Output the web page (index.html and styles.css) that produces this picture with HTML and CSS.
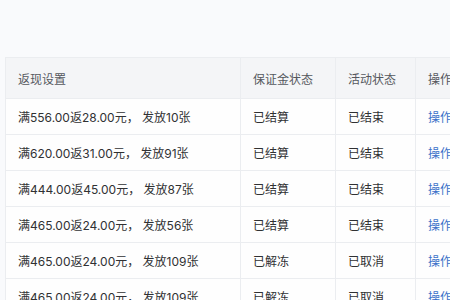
FILE: index.html
```html
<!DOCTYPE html>
<html lang="zh">
<head>
<meta charset="utf-8">
<link rel="stylesheet" href="styles.css">
</head>
<body>
<div class="page">
  <div class="topbar"></div>
  <div class="table-wrap">
    <table class="grid">
      <colgroup>
        <col class="c1"><col class="c2"><col class="c3"><col class="c4">
      </colgroup>
      <thead>
        <tr><th>返现设置</th><th>保证金状态</th><th>活动状态</th><th>操作</th></tr>
      </thead>
      <tbody>
        <tr><td>满556.00返28.00元， 发放10张</td><td>已结算</td><td>已结束</td><td><a class="op">操作</a></td></tr>
        <tr><td>满620.00返31.00元， 发放91张</td><td>已结算</td><td>已结束</td><td><a class="op">操作</a></td></tr>
        <tr><td>满444.00返45.00元， 发放87张</td><td>已结算</td><td>已结束</td><td><a class="op">操作</a></td></tr>
        <tr><td>满465.00返24.00元， 发放56张</td><td>已结算</td><td>已结束</td><td><a class="op">操作</a></td></tr>
        <tr><td>满465.00返24.00元， 发放109张</td><td>已解冻</td><td>已取消</td><td><a class="op">操作</a></td></tr>
        <tr><td>满465.00返24.00元， 发放109张</td><td>已解冻</td><td>已取消</td><td><a class="op">操作</a></td></tr>
      </tbody>
    </table>
  </div>
</div>
</body>
</html>
```
FILE: styles.css
```css
html, body {
  margin: 0;
  padding: 0;
  background: #f9fafc;
  overflow: hidden;
}
.page {
  width: 450px;
  height: 300px;
  overflow: hidden;
  font-family: Inter, "Noto Sans CJK SC", sans-serif;
  font-size: 12px;
  color: #303133;
}
.topbar {
  height: 57px;
}
.table-wrap {
  padding-left: 5px;
}
.grid {
  border-collapse: collapse;
  table-layout: fixed;
  width: 520px;
  background: #fefefe;
}
.c1 { width: 235px; }
.c2 { width: 95px; }
.c3 { width: 80px; }
.c4 { width: 110px; }
.grid th,
.grid td {
  text-align: left;
  padding: 0 12px;
  border: 1px solid #ebedf0;
  white-space: nowrap;
  overflow: hidden;
}
.grid th {
  height: 40px;
  background: #f4f5f7;
  color: #55585e;
  font-weight: normal;
}
.grid td {
  height: 35px;
}
.op {
  color: #3a72c9;
}
```
